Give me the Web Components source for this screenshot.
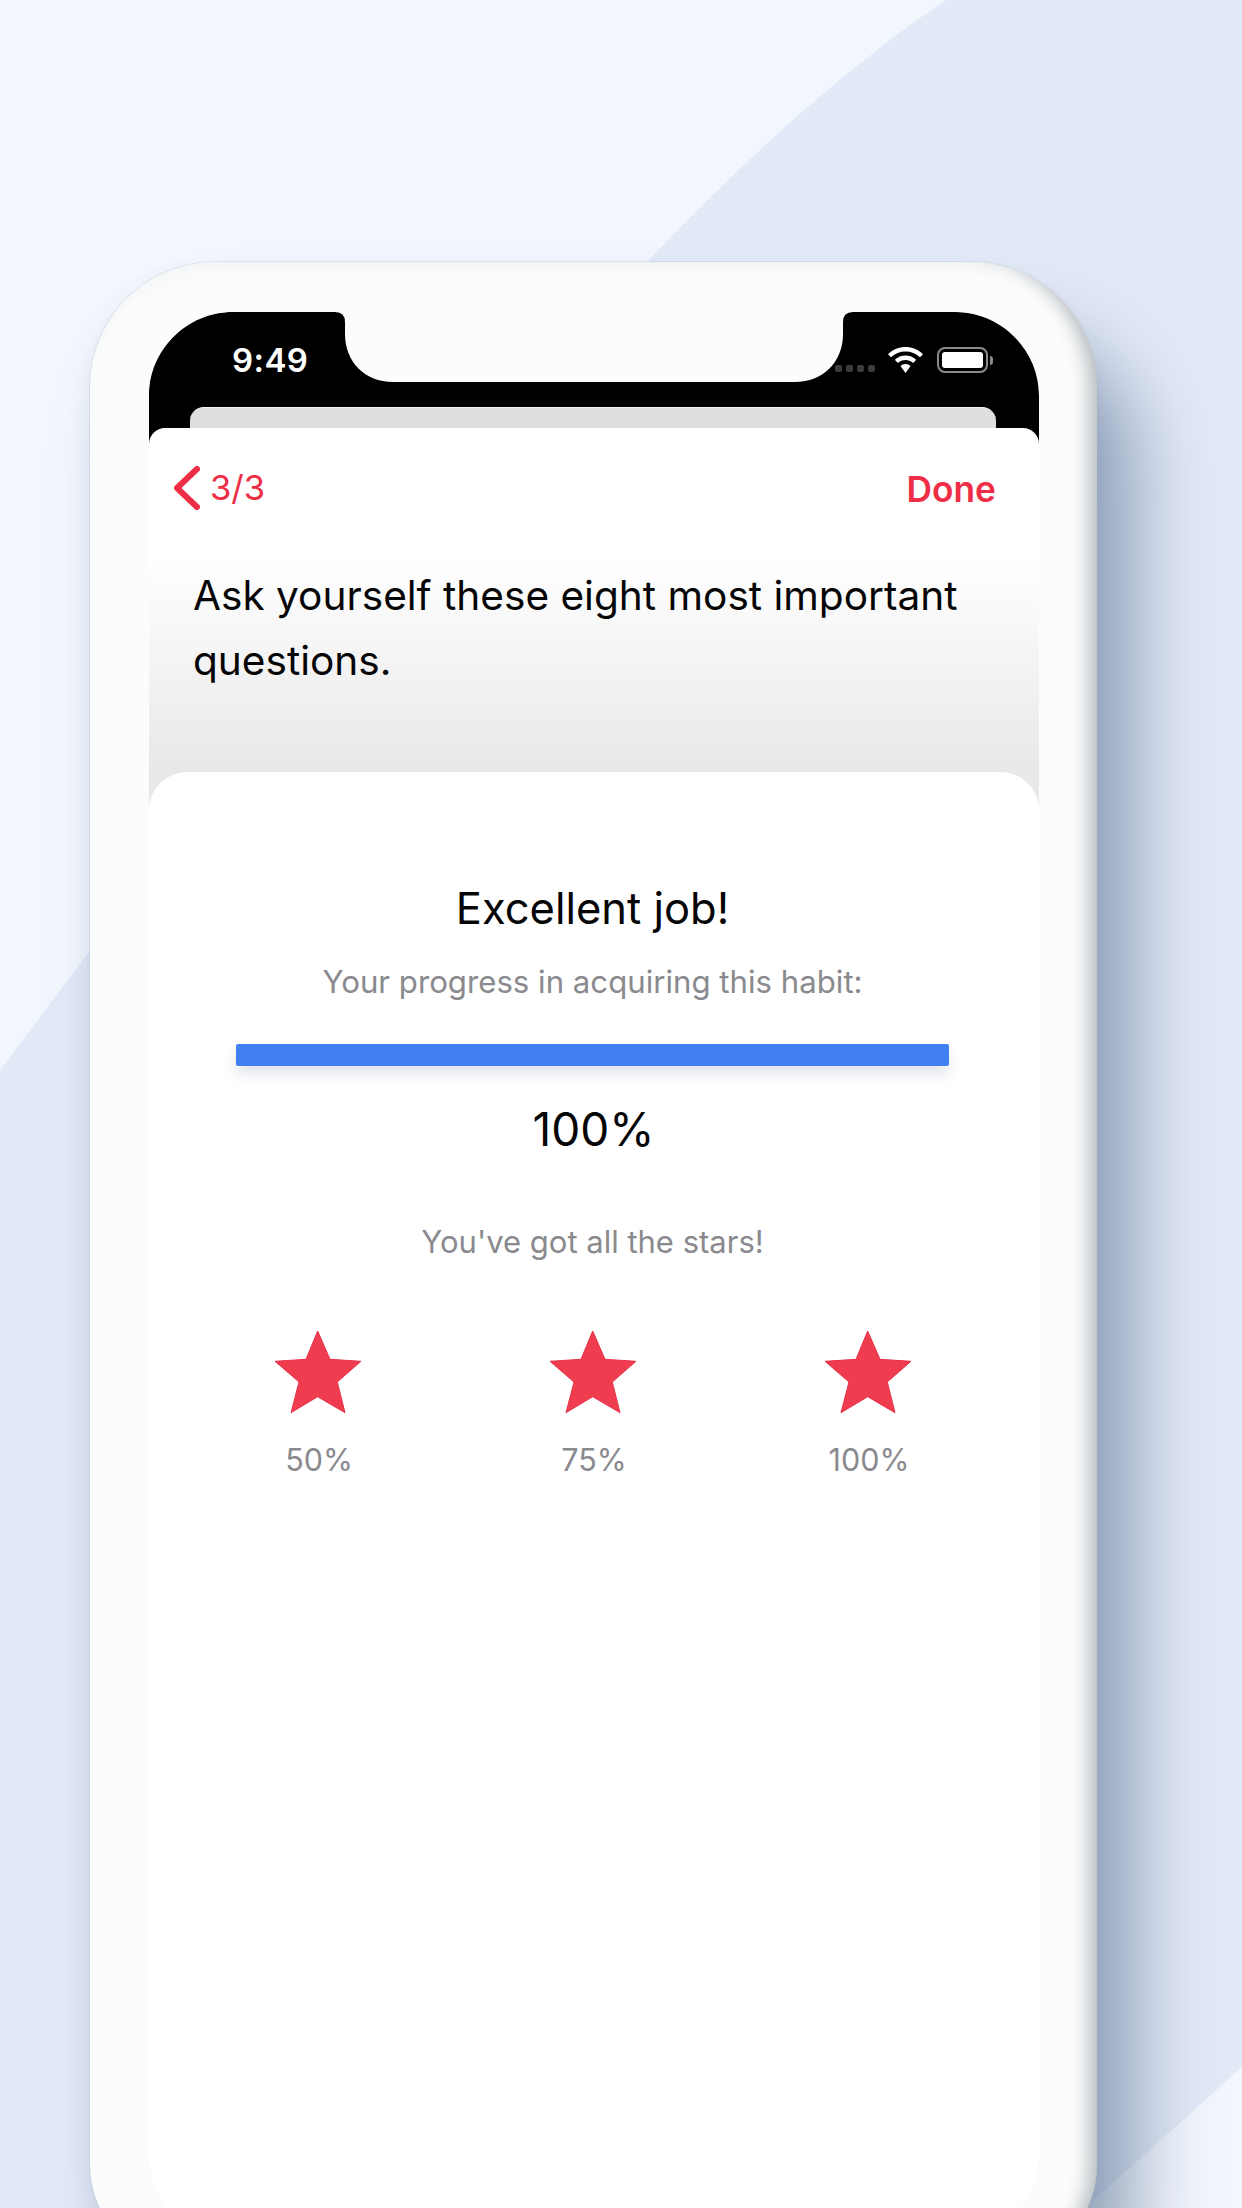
<!DOCTYPE html>
<html><head><meta charset="utf-8">
<style>
html,body{margin:0;padding:0;width:1242px;height:2208px;overflow:hidden;background:#f2f6fe;font-family:Inter,"Liberation Sans",sans-serif}
</style></head>
<body>
<mock-stage>
  <phone-frame>
    <status-bar slot="status"></status-bar>
    <app-sheet>
      <nav-row back="3/3" action="Done"></nav-row>
      <p>Ask yourself these eight most important questions.</p>
      <result-card>
        <progress-block value="100"></progress-block>
        <star-row>
          <star-item label="50%"></star-item>
          <star-item label="75%"></star-item>
          <star-item label="100%"></star-item>
        </star-row>
      </result-card>
    </app-sheet>
  </phone-frame>
</mock-stage>
<script>
function def(name, html){
  customElements.define(name, class extends HTMLElement{
    constructor(){super();this.attachShadow({mode:'open'}).innerHTML=typeof html==='function'?html(this):html;}
  });
}
def('mock-stage',`<style>
:host{display:block;position:relative;width:1242px;height:2208px;overflow:hidden;padding:262px 0 0 90px;box-sizing:border-box}
svg{position:absolute;left:0;top:0}
::slotted(*){position:relative}
</style>
<svg width="1242" height="2208" viewBox="0 0 1242 2208"><rect width="1242" height="2208" fill="#f2f6fd"/>
<path d="M0 1070C250 740 612 224 946 0H1242V2067L1085 2208H0Z" fill="#e2e9f7"/></svg>
<slot></slot>`);

def('phone-frame',`<style>
:host{display:block;width:1007px;height:2003px;box-sizing:border-box;padding:50px 58px 35px 59px;background:#fbfcfc;
border-radius:125px 125px 100px 100px;
box-shadow:0 0 0 1px rgba(170,180,195,.25),44px 70px 80px -8px rgba(75,100,135,.58),-4px 10px 18px rgba(120,140,170,.1),inset -22px 0 18px -14px rgba(90,100,110,.42),inset 0 14px 16px -10px rgba(240,242,244,.8)}
.screen{position:relative;height:100%;display:flex;flex-direction:column;border-radius:80px 80px 70px 70px;overflow:hidden}
svg{position:absolute;left:0;top:0}
.grey{position:relative;height:21px;margin:0 43px 0 41px;background:#dedede;border-radius:14px 14px 0 0;flex:none;border-top:1px solid #f2f2f2;box-sizing:border-box}
.body{position:relative;flex:1;display:flex;min-height:0}
</style>
<div class="screen">
<svg width="890" height="150" viewBox="0 0 890 150"><path fill="#000" d="M0 150V84C0 38 38 0 84 0H186Q196 0 196 10V22C196 50 216 70 244 70H646C674 70 694 50 694 22V10Q694 0 704 0H806C852 0 890 38 890 84V150Z"/></svg>
<slot name="status"></slot>
<div class="grey"></div>
<div class="body"><slot></slot></div>
</div>`);

def('status-bar',`<style>
:host{display:flex;position:relative;height:95px;flex:none;align-items:flex-start;color:#fff;box-sizing:border-box;padding:0 46px 0 83px}
.t{font:600 33px/1 Inter,sans-serif;margin-top:32px;letter-spacing:.4px}
.r{margin-left:auto;display:flex;align-items:center;margin-top:35px}
.d{width:7px;height:7px;border-radius:2px;background:#3c3c3c;margin-right:4px;margin-top:16px}
.w{margin:0 14px 0 9px}
.b{width:51px;height:26px;box-sizing:border-box;border:2px solid #8a8a8a;border-radius:8px;padding:3px}
.b i{display:block;height:100%;background:#fff;border-radius:3px}
.n{width:3px;height:9px;background:#8a8a8a;border-radius:0 3px 3px 0;margin-left:2px}
</style><div class="t">9:49</div><div class="r"><span class="d"></span><span class="d"></span><span class="d"></span><span class="d"></span>
<svg class="w" width="35" height="26" viewBox="0 0 35 26"><path fill="#fff" d="M17.5 0C11 0 5 2.500 0 7.200L3 10.300C7 6.500 12 4.600 17.500 4.600S28 6.500 32 10.300L35 7.200C30 2.500 24 0 17.500 0Z"/><path fill="#fff" d="M17.500 8.500C13.500 8.500 9.800 10 6.800 12.800L9.800 15.900C12 13.900 14.600 12.900 17.500 12.900S23 13.900 25.200 15.900L28.200 12.800C25.200 10 21.500 8.500 17.500 8.500Z"/><path fill="#fff" d="M17.500 17C15.500 17 13.900 17.700 12.500 19L17.500 26L22.500 19C21.100 17.700 19.500 17 17.500 17Z"/></svg>
<span class="b"><i></i></span><span class="n"></span></div>`);

def('app-sheet',`<style>
:host{display:flex;flex-direction:column;flex:1;position:relative;background:linear-gradient(#fff 0,#fff 130px,#e8e8e8 344px);border-radius:16px 16px 0 0;overflow:hidden}
::slotted(p){margin:0;padding:16px 40px 0 44px;font:400 40.600px/64.500px Inter,sans-serif;color:#050505;height:224px;box-sizing:border-box;flex:none}
</style><slot></slot>`);

def('nav-row',el=>`<style>
:host{display:flex;align-items:center;height:120px;padding:0 43px 0 25px;color:#ee2d46;flex:none}
svg{margin-right:10px;flex:none}
.b{font:400 34.500px/1 Inter,sans-serif}
.a{margin:3px 0 0 auto;font:600 35.300px/1 Inter,sans-serif}
</style><svg width="26" height="44" viewBox="0 0 26 44"><path d="M23 3L3 22L23 41" fill="none" stroke="#ee2d46" stroke-width="6" stroke-linecap="round" stroke-linejoin="round"/></svg><span class="b">${el.getAttribute('back')}</span><span class="a">${el.getAttribute('action')}</span>`);

def('result-card',`<style>
:host{display:block;flex:1;background:#fff;border-radius:38px 38px 0 0;padding-top:115px;text-align:center}
</style><slot></slot>`);

def('progress-block',el=>`<style>
:host{display:flex;flex-direction:column;align-items:center;padding-right:3px}
h2{margin:0;font:400 43.500px/1 Inter,sans-serif;color:#050505;height:43px}
.s{margin-top:37px;font:400 31.200px/1 Inter,sans-serif;color:#8a8a8e}
.bar{margin:46px 0 0;width:713px;height:22px;background:#4080f0;border-radius:2px;box-shadow:0 8px 14px rgba(90,110,150,.18)}
.v{margin:40px 0 0 2px;font:400 46px/1 Inter,sans-serif;color:#050505}
.n{margin-top:74px;font:400 31px/1 Inter,sans-serif;color:#8a8a8e}
</style><h2>Excellent job!</h2><div class="s">Your progress in acquiring this habit:</div><div class="bar"></div><div class="v">${el.getAttribute('value')}%</div><div class="n">You've got all the stars!</div>`);

def('star-row',`<style>
:host{display:grid;grid-template-columns:repeat(3,275px);justify-content:center;margin-top:73px}
</style><slot></slot>`);

def('star-item',el=>`<style>
:host{display:flex;flex-direction:column;align-items:center}
svg{overflow:visible}
span{margin-top:31px;font:400 30.500px/1 Inter,sans-serif;color:#8a8a8e}
</style><svg width="87" height="84" viewBox="1 -1 87 84"><path fill="#ef3d4f" stroke="#e9304a" stroke-width="1" stroke-linejoin="round" d="M42.700 0L55 28.300L86 30.300L62.300 51L70 81.700L42.700 65.700L16 81.700L24 51L0 30.300L31 28.300Z"/></svg><span>${el.getAttribute('label')}</span>`);
</script>
</body></html>
